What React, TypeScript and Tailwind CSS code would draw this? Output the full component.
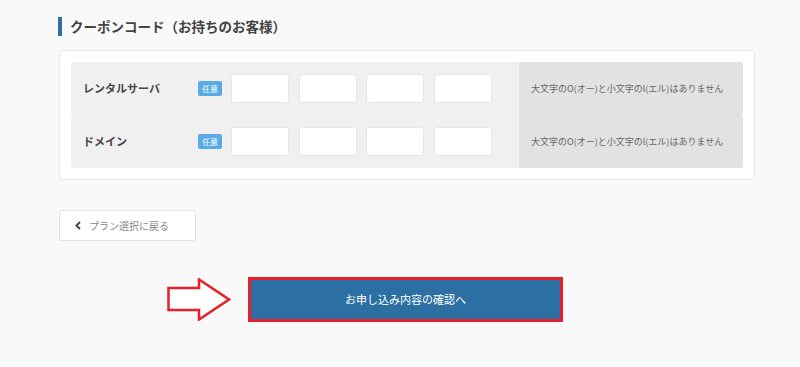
import React from "react";

const FONT = { fontFamily: '"Noto Sans CJK JP", "Noto Sans", sans-serif' };

function Row({ label }: { label: string }) {
  return (
    <div className="flex h-[53px] overflow-hidden rounded-[3px]">
      <div className="flex w-[448px] items-center bg-[#f0f0f0] pl-[12px]">
        <div className="w-[115px] text-[11px] font-bold text-[#444]">{label}</div>
        <div className="flex h-[15px] w-[24px] items-center justify-center rounded-[2px] bg-[#5aaae6] text-[8px] leading-none text-white">
          任意
        </div>
        <div className="ml-[9px] flex gap-[9.5px]">
          {[0, 1, 2, 3].map((i) => (
            <div
              key={i}
              className="h-[29px] w-[58px] rounded-[3px] border border-[#e6e6e6] bg-white"
            />
          ))}
        </div>
      </div>
      <div className="flex flex-1 items-center bg-[#e2e2e2] pl-[12px] text-[9px] text-[#666]">
        大文字のO(オー)と小文字のl(エル)はありません
      </div>
    </div>
  );
}

export default function App() {
  return (
    <div className="min-h-[367px] w-[800px] bg-[#f9f9f9] pl-[59px] pt-[17px]" style={FONT}>
      <div className="-ml-[1px] flex h-[19px] items-center border-l-[4px] border-[#2d6fa6] pl-[8px] text-[13.5px] font-bold text-[#444]">
        クーポンコード（お持ちのお客様）
      </div>
      <div className="mt-[14px] w-[696px] rounded-[3px] border border-[#e8e8e8] bg-white p-[11px]">
        <div className="flex flex-col">
          <Row label="レンタルサーバ" />
          <Row label="ドメイン" />
        </div>
      </div>
      <div className="mt-[30px] flex h-[31px] w-[137px] items-center rounded-[2px] border border-[#e5e5e5] bg-white pl-[14px] text-[10px] text-[#888]">
        <svg width="8" height="9" viewBox="0 0 8 9" className="mr-[7px]">
          <path d="M6 1 L2.5 4.5 L6 8" stroke="#444" strokeWidth="2" fill="none" />
        </svg>
        プラン選択に戻る
      </div>
      <div className="mt-[36px] flex items-center pl-[108px]">
        <svg width="64" height="43" viewBox="0 0 64 43">
          <path
            d="M1.5 10 L32 10 L32 1.5 L62 21.5 L32 41.5 L32 32 L1.5 32 Z"
            fill="white"
            stroke="#e8202a"
            strokeWidth="2.5"
            strokeLinejoin="miter"
          />
        </svg>
        <div className="ml-[17px] flex h-[45px] w-[315px] items-center justify-center border-[3px] border-[#e8202a] bg-[#2b6fa3] text-[11px] text-white">
          お申し込み内容の確認へ
        </div>
      </div>
    </div>
  );
}
